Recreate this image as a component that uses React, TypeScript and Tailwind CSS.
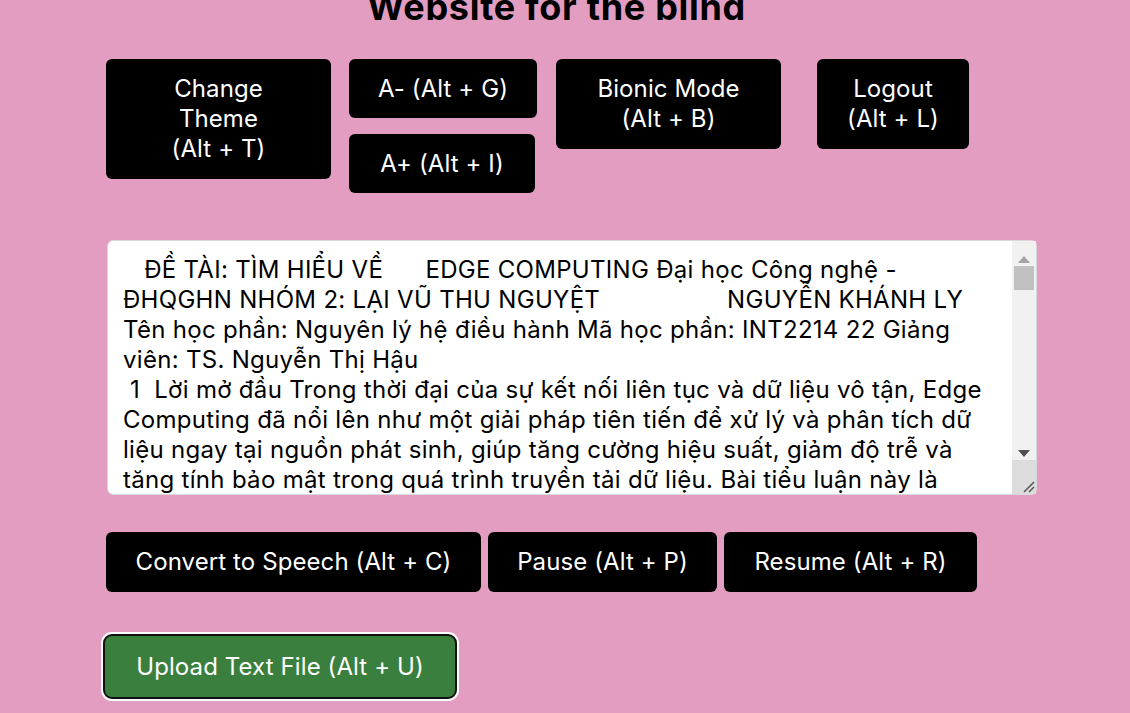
import { useState } from 'react';

const initialText =
  '   ĐỀ TÀI: TÌM HIỂU VỀ      EDGE COMPUTING Đại học Công nghệ -\n' +
  'ĐHQGHN NHÓM 2: LẠI VŨ THU NGUYỆT                  NGUYỄN KHÁNH LY\n' +
  'Tên học phần: Nguyên lý hệ điều hành Mã học phần: INT2214 22 Giảng\n' +
  'viên: TS. Nguyễn Thị Hậu\n' +
  ' 1  Lời mở đầu Trong thời đại của sự kết nối liên tục và dữ liệu vô tận, Edge\n' +
  'Computing đã nổi lên như một giải pháp tiên tiến để xử lý và phân tích dữ\n' +
  'liệu ngay tại nguồn phát sinh, giúp tăng cường hiệu suất, giảm độ trễ và\n' +
  'tăng tính bảo mật trong quá trình truyền tải dữ liệu. Bài tiểu luận này là\n' +
  'một nghiên cứu về Edge Computing, tập trung vào khái niệm, kiến trúc, ưu\n' +
  'điểm, thách thức và các ứng dụng thực tế của công nghệ này trong đời sống.\n' +
  ' 2  Khái niệm Edge Computing Edge Computing là mô hình điện toán phân tán\n' +
  'đưa việc xử lý dữ liệu đến gần nơi dữ liệu được tạo ra.';

const btn =
  'bg-black text-white rounded-[6px] text-center text-[24px] leading-[30px] tracking-[0.1px]';

// the textarea's native scrollbar, drawn over its right edge
function FakeScrollbar() {
  return (
    <div className="pointer-events-none absolute top-px right-px bottom-px flex w-[24px] flex-col bg-[#f1f1f1]">
      <div className="flex h-[22px] items-end justify-center">
        <svg width="12" height="7" viewBox="0 0 12 7">
          <path d="M6 0 L12 7 L0 7 Z" fill="#a3a3a3" />
        </svg>
      </div>
      <div className="mx-[2px] mt-[3px] h-[24px] bg-[#c1c1c1]" />
      <div className="flex-1" />
      <div className="flex h-[10px] items-start justify-center">
        <svg width="12" height="7" viewBox="0 0 12 7">
          <path d="M0 0 L12 0 L6 7 Z" fill="#505050" />
        </svg>
      </div>
      <div className="relative h-[34px] bg-[#dcdcdc]">
        <svg className="absolute right-[1px] bottom-[1px]" width="14" height="14" viewBox="0 0 14 14">
          <path d="M13 3 L3 13 M13 8 L8 13" stroke="#555" strokeWidth="1.5" />
        </svg>
      </div>
    </div>
  );
}

export default function App() {
  const [text, setText] = useState(initialText);

  return (
    <div className="min-h-screen bg-[#e39dc0] font-['Inter',sans-serif] text-black">
      <div className="flex flex-col pl-[106px] pr-[93px]">
        {/* Title */}
        <h1 className="-mt-[11px] pr-[30px] text-center text-[36px] font-bold leading-[36px] tracking-[0.7px]">
          Website for the blind
        </h1>

        {/* Toolbar */}
        <div className="mt-[34px] flex items-start">
          <button className={`${btn} h-[120px] w-[225px] px-[40px]`}>
            Change Theme
            <br />
            (Alt + T)
          </button>
          <div className="ml-[18px] flex flex-col gap-[16px]">
            <button className={`${btn} h-[59px] w-[188px]`}>A- (Alt + G)</button>
            <button className={`${btn} h-[59px] w-[186px]`}>A+ (Alt + I)</button>
          </div>
          <button className={`${btn} ml-[19px] h-[90px] w-[225px]`}>
            Bionic Mode
            <br />
            (Alt + B)
          </button>
          <button className={`${btn} ml-[36px] h-[90px] w-[152px]`}>
            Logout
            <br />
            (Alt + L)
          </button>
        </div>

        {/* Text area */}
        <div className="relative mt-[47px] ml-px h-[255px] w-[930px]">
          <textarea
            value={text}
            onChange={(e) => setText(e.target.value)}
            className="block h-full w-full resize-none overflow-y-scroll rounded-[6px] border border-[#d9d9d9] bg-white py-[14px] pl-[15px] pr-[28px] text-[24px] leading-[30px] tracking-[0.3px] text-black outline-none"
          />
          <FakeScrollbar />
        </div>

        {/* Speech controls */}
        <div className="mt-[37px] flex gap-[7px]">
          <button className={`${btn} h-[60px] w-[375px]`}>Convert to Speech (Alt + C)</button>
          <button className={`${btn} h-[60px] w-[229px]`}>Pause (Alt + P)</button>
          <button className={`${btn} h-[60px] w-[253px]`}>Resume (Alt + R)</button>
        </div>

        {/* Upload */}
        <div className="mt-[42px] -ml-[3px]">
          <button className="h-[65px] w-[354px] rounded-[9px] border-2 border-[#111] bg-[#3a7f3d] text-center text-[24px] leading-[30px] tracking-[0.1px] text-white ring-2 ring-white">
            Upload Text File (Alt + U)
          </button>
        </div>
      </div>
    </div>
  );
}
